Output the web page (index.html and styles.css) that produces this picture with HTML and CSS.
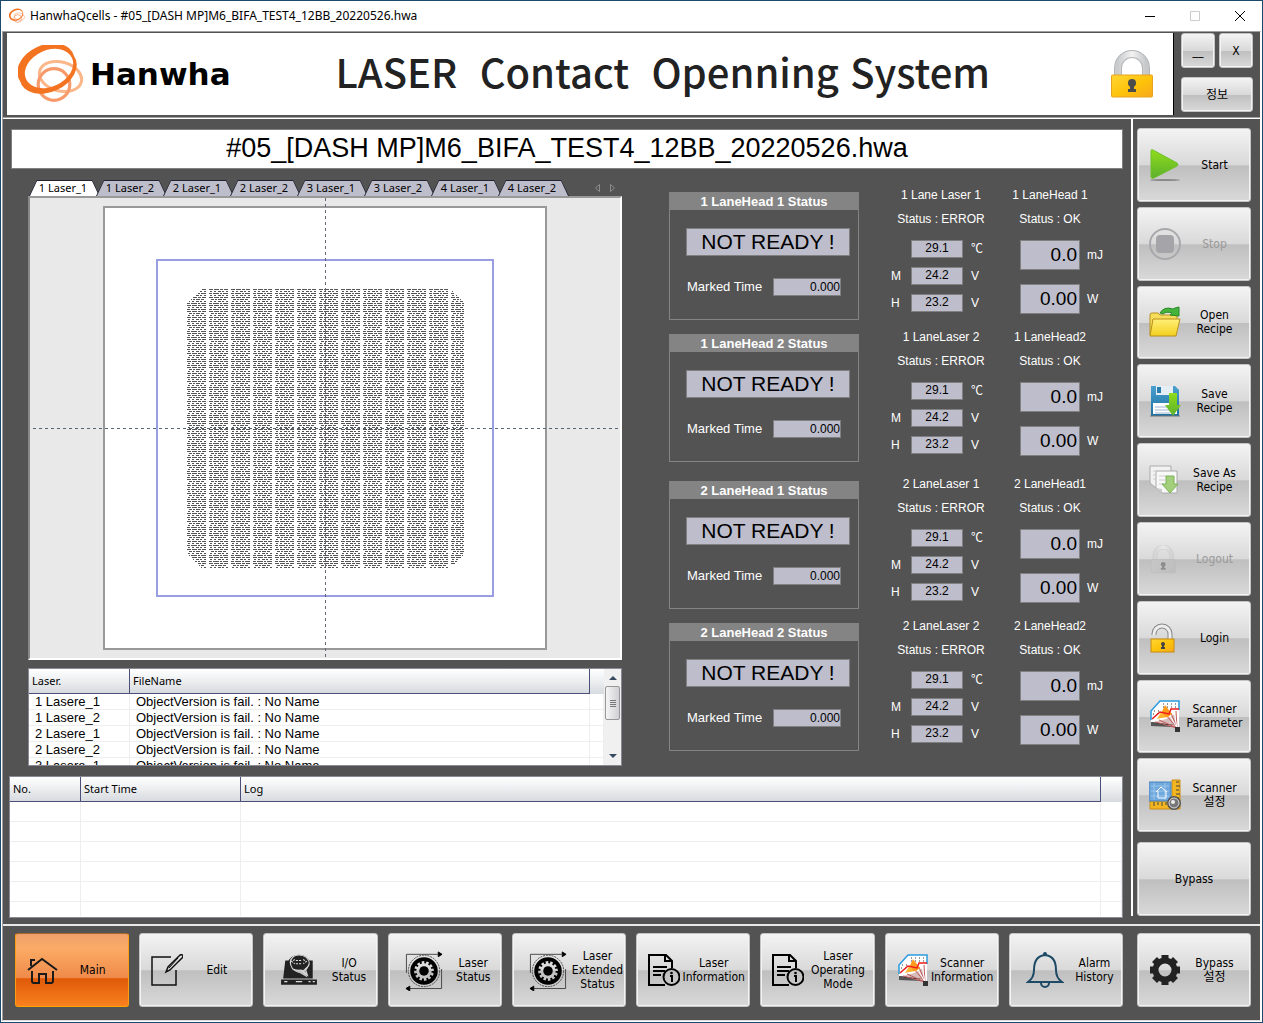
FILE: index.html
```
<!DOCTYPE html>
<html lang="ko">
<head>
  <meta charset="UTF-8" />
  <meta name="viewport" content="width=device-width, initial-scale=1" />
  <title>HanwhaQcells - #05_[DASH MP]M6_BIFA_TEST4_12BB_20220526.hwa</title>
  <link rel="stylesheet" href="styles.css">
</head>
<body>

<!-- shared icons -->
<svg class="defs" width="0" height="0" aria-hidden="true">
  <defs>
    <linearGradient id="gold" x1="0" y1="0" x2="1" y2="1"><stop offset="0" stop-color="#ffd633"/><stop offset=".55" stop-color="#fdc20a"/><stop offset="1" stop-color="#f7a81c"/></linearGradient>
    <linearGradient id="steel" x1="0" y1="0" x2="1" y2="0"><stop offset="0" stop-color="#c9cbcd"/><stop offset=".5" stop-color="#f2f2f2"/><stop offset="1" stop-color="#c5c7c9"/></linearGradient>
    <linearGradient id="green" x1="0" y1="0" x2="0" y2="1"><stop offset="0" stop-color="#8fdc1c"/><stop offset="1" stop-color="#5cb02c"/></linearGradient>
    <linearGradient id="folder" x1="0" y1="0" x2="0" y2="1"><stop offset="0" stop-color="#fff07a"/><stop offset="1" stop-color="#f3cf1c"/></linearGradient>
    <linearGradient id="blue" x1="0" y1="0" x2="0" y2="1"><stop offset="0" stop-color="#4aa0cf"/><stop offset="1" stop-color="#1d6f9f"/></linearGradient>
  </defs>
  <symbol id="i-logo" viewBox="0 -1 66 58">
    <ellipse cx="42.500" cy="30.500" rx="21.500" ry="14.500" transform="rotate(15 42.500 30.500)" fill="none" stroke="#fbb689" stroke-width="3"/>
    <circle cx="36" cy="38.500" r="15.800" fill="none" stroke="#f89b6c" stroke-width="3.200"/>
    <path fill="#f37321" fill-rule="evenodd" d="M2 35 A30 21 -25 1 1 56 10 A30 21 -25 1 1 2 35 M8 33 A25 18 -25 1 0 54 12 A25 18 -25 1 0 8 33"/>
  </symbol>
  <symbol id="i-lock" viewBox="0 0 42 48">
    <path d="M7 25V18a14 14 0 0 1 28 0v7" fill="none" stroke="#b4b6b8" stroke-width="8"/>
    <path d="M7 25V18a14 14 0 0 1 28 0v7" fill="none" stroke="url(#steel)" stroke-width="6"/>
    <rect x=".5" y="25" width="41" height="22" rx="1" fill="url(#gold)" stroke="#e9a41f"/>
    <circle cx="21" cy="33" r="4" fill="#4c4c4c"/><path d="M19 34h4v5h2v3h-8v-3h2z" fill="#4c4c4c"/>
  </symbol>
  <symbol id="i-scan" viewBox="0 0 32 32">
    <path d="M2 11L11 1h19v26L2 22z" fill="#fff"/>
    <path d="M2 20v-9L11 1h19v9" fill="none" stroke="#2a9be0" stroke-width="1.500"/>
    <path d="M14 4h15M14 7h15M5 11h8M4 14h6" stroke="#333" stroke-width="1" stroke-dasharray="1 3"/>
    <path d="M2 23l26 6-2-15-9 5z" fill="#d9bcbc"/>
    <path d="M2 22l24 3-22 0z" fill="#333"/>
    <path d="M28 28L17 15M28 28L10 20M28 28L22 13M28 28l-1-17M28 28L6 22" stroke="#c05a5a" stroke-width="1"/>
    <path d="M28 28L20 14M28 28L25 12" stroke="#fff" stroke-width="1"/>
    <path d="M10 18l6-13 7 9-4 3z" fill="#ff9a1a"/><path d="M8 19l5-8 3 6z" fill="#ffb52e"/>
    <path d="M3 19l8-7 9 2 2-5h8" fill="none" stroke="#ee1c1c" stroke-width="1.500"/>
    <path d="M2 22l22 5-22-1z" fill="#555"/>
    <rect x="26" y="27" width="5" height="5" fill="#333"/>
  </symbol>
  <symbol id="i-cog" viewBox="0 0 40 42">
    <path d="M1.500 24V4.500h33M38.500 20v20.500H5" fill="none" stroke="#444" stroke-width="1"/>
    <path d="M39 4.500l-4-2.500v5zM1 40.500l4-2.500v5z" fill="#000" stroke="#000"/>
    <circle cx="20" cy="22" r="16.500" fill="none" stroke="#444" stroke-dasharray="2 1"/>
    <circle cx="20" cy="22" r="12.500" fill="none" stroke="#000" stroke-width="4"/>
    <circle cx="20" cy="22" r="10" fill="none" stroke="#000" stroke-width="4" stroke-dasharray="2.240 3"/>
    <circle cx="20" cy="22" r="5" fill="#000"/>
  </symbol>
  <symbol id="i-doc" viewBox="0 0 32 32">
    <path d="M17 31H1V1h17l6 6v7" fill="none" stroke="#000" stroke-width="2"/>
    <path d="M17 1v6h7M5 13h14M5 17h12M5 21h8" fill="none" stroke="#000" stroke-width="2"/>
    <circle cx="23.500" cy="23" r="8" fill="none" stroke="#000" stroke-width="2"/>
    <path d="M22 22h2v6" fill="none" stroke="#000" stroke-width="2"/><circle cx="23.500" cy="19" r="1.300"/>
  </symbol>
</svg>

<header class="titlebar">
  <svg class="app-icon"><use href="#i-logo"/></svg>
  <span class="app-title">HanwhaQcells - #05_[DASH MP]M6_BIFA_TEST4_12BB_20220526.hwa</span>
  <button class="win-btn" aria-label="Minimize"><svg width="12" height="12"><path d="M1 6.500h10" stroke="#000"/></svg></button>
  <button class="win-btn" aria-label="Maximize" disabled><svg width="12" height="12"><path d="M1.500 1.500h9v9h-9z" fill="none" stroke="#ccc"/></svg></button>
  <button class="win-btn" aria-label="Close"><svg width="12" height="12"><path d="M1 1l10 10M11 1L1 11" stroke="#000"/></svg></button>
</header>

<div class="frame">
  <div class="banner">
    <div class="banner-panel">
      <div class="brand"><svg class="brand-mark"><use href="#i-logo"/></svg><span>Hanwha</span></div>
      <h1>LASER  Contact  Openning System</h1>
      <svg class="banner-lock"><use href="#i-lock"/></svg>
    </div>
    <div class="banner-buttons">
      <button class="btn small">__</button>
      <button class="btn small">X</button>
      <button class="btn small info">정보</button>
    </div>
  </div>

  <div class="middle">
    <main class="content">
      <h2 class="recipe-name">#05_[DASH MP]M6_BIFA_TEST4_12BB_20220526.hwa</h2>

      <div class="workspace">
        <div class="left">
          <div class="tabs">
            <button class="tab active"><span>1 Laser_1</span></button>
            <button class="tab"><span>1 Laser_2</span></button>
            <button class="tab"><span>2 Laser_1</span></button>
            <button class="tab"><span>2 Laser_2</span></button>
            <button class="tab"><span>3 Laser_1</span></button>
            <button class="tab"><span>3 Laser_2</span></button>
            <button class="tab"><span>4 Laser_1</span></button>
            <button class="tab"><span>4 Laser_2</span></button>
            <svg class="tab-nav" width="24" height="10"><path d="M6.500 1.500v7l-4-3.500zM17.500 1.500v7l4-3.500z" fill="none" stroke="#8c8c8c"/></svg>
          </div>
          <div class="view">
            <svg viewBox="0 0 590 460" shape-rendering="crispEdges">
              <defs>
                <pattern id="hatch" width="22" height="28" x="157" y="91" patternUnits="userSpaceOnUse">
                  <g stroke="#555" stroke-width="1" fill="none">
                    <path d="M0 .5h4m1 0h5m1 0h3m1 0h4M0 8.500h4m1 0h5m1 0h3m1 0h4M0 16.500h4m1 0h5m1 0h3m1 0h4M0 22.500h4m1 0h5m1 0h3m1 0h4"/>
                    <path d="M1 2.500h2m2 0h2m2 0h3m1 0h2m2 0h2M1 6.500h2m2 0h2m2 0h3m1 0h2m2 0h2M1 12.500h2m2 0h2m2 0h3m1 0h2m2 0h2M1 18.500h2m2 0h2m2 0h3m1 0h2m2 0h2M1 26.500h2m2 0h2m2 0h3m1 0h2m2 0h2"/>
                    <path d="M0 4.500h3m1 0h6m1 0h2m1 0h5M0 14.500h3m1 0h6m1 0h2m1 0h5M0 20.500h3m1 0h6m1 0h2m1 0h5"/>
                    <path d="M2 10.500h3m1 0h2m1 0h4m1 0h3M2 24.500h3m1 0h2m1 0h4m1 0h3"/>
                  </g>
                </pattern>
              </defs>
              <rect x="74" y="9" width="442" height="442" fill="#fff" stroke="#999" stroke-width="2"/>
              <rect x="127" y="62" width="336" height="336" fill="none" stroke="#999de2" stroke-width="2"/>
              <path d="M171 91H420L434 105V356L420 370H171L157 356V105Z" fill="url(#hatch)"/>
              <path d="M295.500 0V460" stroke="#667" stroke-dasharray="3 3"/>
              <path d="M3 230.500H590" stroke="#567" stroke-dasharray="3 3"/>
            </svg>
          </div>
          <div class="file-list">
            <div class="file-rows">
              <table>
                <colgroup><col class="c-laser"><col><col class="c-tail"></colgroup>
                <thead><tr><th>Laser.</th><th>FileName</th><td></td></tr></thead>
                <tbody>
                  <tr><td>1 Lasere_1</td><td>ObjectVersion is fail. : No Name</td><td></td></tr>
                  <tr><td>1 Lasere_2</td><td>ObjectVersion is fail. : No Name</td><td></td></tr>
                  <tr><td>2 Lasere_1</td><td>ObjectVersion is fail. : No Name</td><td></td></tr>
                  <tr><td>2 Lasere_2</td><td>ObjectVersion is fail. : No Name</td><td></td></tr>
                  <tr><td>3 Lasere_1</td><td>ObjectVersion is fail. : No Name</td><td></td></tr>
                </tbody>
              </table>
            </div>
            <div class="scrollbar">
              <button aria-label="Scroll up"><svg width="8" height="4"><path d="M0 4l4-4 4 4z" fill="#34495e"/></svg></button>
              <div class="thumb"></div>
              <button aria-label="Scroll down"><svg width="8" height="4"><path d="M0 0l4 4 4-4z" fill="#34495e"/></svg></button>
            </div>
          </div>
        </div>

        <div class="lanes">
          <section class="lane">
            <fieldset class="head-box">
              <legend>1 LaneHead 1 Status</legend>
              <input class="ready" value="NOT READY !" aria-label="1 LaneHead 1 Status" readonly>
              <label>Marked Time <input value="0.000" readonly></label>
            </fieldset>
            <div class="laser">
              <p>1 Lane Laser 1</p>
              <p>Status : ERROR</p>
              <div class="readings">
                <label for="t11"></label><input id="t11" value="29.1" aria-label="Temperature" readonly><span>℃</span>
                <label for="m11">M</label><input id="m11" value="24.2" readonly><span>V</span>
                <label for="h11">H</label><input id="h11" value="23.2" readonly><span>V</span>
              </div>
            </div>
            <div class="power">
              <p>1 LaneHead 1</p>
              <p>Status : OK</p>
              <label><input value="0.0" readonly> mJ</label>
              <label><input value="0.00" readonly> W</label>
            </div>
          </section>

          <section class="lane">
            <fieldset class="head-box">
              <legend>1 LaneHead 2 Status</legend>
              <input class="ready" value="NOT READY !" aria-label="1 LaneHead 2 Status" readonly>
              <label>Marked Time <input value="0.000" readonly></label>
            </fieldset>
            <div class="laser">
              <p>1 LaneLaser 2</p>
              <p>Status : ERROR</p>
              <div class="readings">
                <label for="t12"></label><input id="t12" value="29.1" aria-label="Temperature" readonly><span>℃</span>
                <label for="m12">M</label><input id="m12" value="24.2" readonly><span>V</span>
                <label for="h12">H</label><input id="h12" value="23.2" readonly><span>V</span>
              </div>
            </div>
            <div class="power">
              <p>1 LaneHead2</p>
              <p>Status : OK</p>
              <label><input value="0.0" readonly> mJ</label>
              <label><input value="0.00" readonly> W</label>
            </div>
          </section>

          <section class="lane second">
            <fieldset class="head-box">
              <legend>2 LaneHead 1 Status</legend>
              <input class="ready" value="NOT READY !" aria-label="2 LaneHead 1 Status" readonly>
              <label>Marked Time <input value="0.000" readonly></label>
            </fieldset>
            <div class="laser">
              <p>2 LaneLaser 1</p>
              <p>Status : ERROR</p>
              <div class="readings">
                <label for="t21"></label><input id="t21" value="29.1" aria-label="Temperature" readonly><span>℃</span>
                <label for="m21">M</label><input id="m21" value="24.2" readonly><span>V</span>
                <label for="h21">H</label><input id="h21" value="23.2" readonly><span>V</span>
              </div>
            </div>
            <div class="power">
              <p>2 LaneHead1</p>
              <p>Status : OK</p>
              <label><input value="0.0" readonly> mJ</label>
              <label><input value="0.00" readonly> W</label>
            </div>
          </section>

          <section class="lane">
            <fieldset class="head-box">
              <legend>2 LaneHead 2 Status</legend>
              <input class="ready" value="NOT READY !" aria-label="2 LaneHead 2 Status" readonly>
              <label>Marked Time <input value="0.000" readonly></label>
            </fieldset>
            <div class="laser">
              <p>2 LaneLaser 2</p>
              <p>Status : ERROR</p>
              <div class="readings">
                <label for="t22"></label><input id="t22" value="29.1" aria-label="Temperature" readonly><span>℃</span>
                <label for="m22">M</label><input id="m22" value="24.2" readonly><span>V</span>
                <label for="h22">H</label><input id="h22" value="23.2" readonly><span>V</span>
              </div>
            </div>
            <div class="power">
              <p>2 LaneHead2</p>
              <p>Status : OK</p>
              <label><input value="0.0" readonly> mJ</label>
              <label><input value="0.00" readonly> W</label>
            </div>
          </section>
        </div>
      </div>

      <div class="log">
        <table>
          <colgroup><col class="c-no"><col class="c-time"><col><col class="c-end"></colgroup>
          <thead><tr><th>No.</th><th>Start Time</th><th>Log</th><td></td></tr></thead>
          <tbody>
            <tr><td></td><td></td><td></td><td></td></tr>
            <tr><td></td><td></td><td></td><td></td></tr>
            <tr><td></td><td></td><td></td><td></td></tr>
            <tr><td></td><td></td><td></td><td></td></tr>
            <tr><td></td><td></td><td></td><td></td></tr>
            <tr class="rest"><td></td><td></td><td></td><td></td></tr>
          </tbody>
        </table>
      </div>
    </main>

    <aside class="side">
      <button class="btn">
        <svg class="icon" viewBox="0 0 32 32"><ellipse cx="16" cy="31" rx="15" ry="1" fill="#888"/><path d="M2 2q0-2 2-1l24 13q2 1 0 3L5 29q-3 1-3-1z" fill="url(#green)" stroke="#6fc02a"/></svg>
        <span>Start</span>
      </button>
      <button class="btn" disabled>
        <svg class="icon" viewBox="0 0 32 32"><circle cx="16" cy="16" r="15" fill="none" stroke="#a9a9ad" stroke-width="2"/><rect x="7" y="7" width="18" height="18" rx="4" fill="#a4a4a9"/></svg>
        <span>Stop</span>
      </button>
      <button class="btn">
        <svg class="icon" viewBox="0 0 32 32"><path d="M1 29V9q0-2 2-2h6l2 2h17v6" fill="#f5dc5a" stroke="#b8901c"/><path d="M4 13h27l-4 17H1z" fill="url(#folder)" stroke="#b8901c"/><path d="M11 7Q15 0 24 3l2-1 4-1v9l-9-1 2-2q-6-2-9 1z" fill="#44b53a" stroke="#2a8a2a"/></svg>
        <span>Open<br>Recipe</span>
      </button>
      <button class="btn">
        <svg class="icon" viewBox="0 0 32 32"><path d="M2 1h24l4 4v26H2z" fill="url(#blue)"/><path d="M7 1h17v9H7z" fill="#e4eef4"/><path d="M8 2h4v6H8z" fill="#2b7fae"/><path d="M4 18h24v11H4z" fill="#fff"/><path d="M6 22h15M6 25h15M6 28h15" stroke="#9bb3d0"/><path d="M20 8h8v12h4l-8 11-8-11h4z" fill="url(#green)"/><path d="M1 31h30" stroke="#777"/></svg>
        <span>Save<br>Recipe</span>
      </button>
      <button class="btn">
        <svg class="icon" viewBox="0 0 32 32"><path d="M1 2h21v22H7l-6-5z" fill="#f2f2f2" stroke="#aaa"/><path d="M7 7h21v22H13l-6-5z" fill="#f8f8f8" stroke="#aaa"/><path d="M4 7h3M4 11h3M4 15h3M10 12h8M10 16h6M10 20h5" stroke="#ccc"/><path d="M17 12h8v8h4l-8 9-8-9h4z" fill="#a3cf7c" stroke="#7cb356"/><path d="M7 24l6 1v4z" fill="#ccc"/></svg>
        <span>Save As<br>Recipe</span>
      </button>
      <button class="btn" disabled>
        <svg class="icon faded" viewBox="-3 -3 54 54"><use href="#i-lock" width="42" height="48"/></svg>
        <span>Logout</span>
      </button>
      <button class="btn">
        <svg class="icon" viewBox="0 0 32 32"><path d="M5 13v-1a8 8 0 0 1 16 0v5" fill="none" stroke="#888" stroke-width="5"/><path d="M5 13v-1a8 8 0 0 1 16 0v5" fill="none" stroke="#eee" stroke-width="3"/><rect x="2" y="17" width="23" height="13" fill="url(#gold)" stroke="#c98c10"/><circle cx="14" cy="22" r="2" fill="#444"/><path d="M13 22h2v3h1v2h-4v-2h1z" fill="#444"/></svg>
        <span>Login</span>
      </button>
      <button class="btn">
        <svg class="icon"><use href="#i-scan"/></svg>
        <span>Scanner<br>Parameter</span>
      </button>
      <button class="btn">
        <svg class="icon" viewBox="0 0 32 32"><path d="M1 22h22V1h8v29H1z" fill="#f4b620" stroke="#c98c10"/><path d="M5 23v4M9 23v3M13 23v4M17 23v3M27 3h3M27 7h4M27 11h3M27 15h4M27 19h3" stroke="#444"/><rect x="0" y="3" width="22" height="19" fill="#6fa8dc" stroke="#4a83bd"/><path d="M2 7h18M2 12h18M2 17h18M5 4v17M16 4v17" stroke="#9cc6ec"/><path d="M7 13l5-5 6 5M9 12v7h8v-7" fill="none" stroke="#fff"/><circle cx="25" cy="24" r="7" fill="#555"/><circle cx="25" cy="24" r="5" fill="#777" stroke="#ddd" stroke-width="1"/><circle cx="24" cy="23" r="2" fill="#eee"/></svg>
        <span>Scanner<br>설정</span>
      </button>
      <button class="btn plain"><span>Bypass</span></button>
    </aside>
  </div>

  <nav class="menu">
    <div class="menu-main">
      <button class="btn current">
        <svg class="icon" viewBox="0 0 32 32"><path d="M1 16L15 5l15 11M4 12V6h4M5 17v10q0 2 2 2h5v-9h7v9h5q2 0 2-2V17" fill="none" stroke="#1a1a1a" stroke-width="2"/></svg>
        <span>Main</span>
      </button>
      <button class="btn">
        <svg class="icon" viewBox="0 0 32 32"><path d="M20 3H1v28h24V16" fill="none" stroke="#111" stroke-width="1.500"/><path d="M15 18l2-5L29 1q2-1 3 1 0 1-1 2L19 16z" fill="none" stroke="#111" stroke-width="1.500"/><path d="M27 4L18 14" stroke="#111"/></svg>
        <span>Edit</span>
      </button>
      <button class="btn wide">
        <svg class="icon" viewBox="0 0 36 32"><path d="M5 7h5q-1 10 9 12l7 4-2-6q4-3 3-10h4v17H3z" fill="#222"/><ellipse cx="18" cy="9" rx="9.500" ry="7" fill="#222" stroke="#222"/><path d="M12 15q5 2 8 1l6 5-2-6q7-5 1-11-6-4-12-1-6 5-1 12" fill="none" stroke="#ddd"/><path d="M14 6l-3 2 3 2M22 6l3 2-3 2M15 7h6M15 10h6" fill="none" stroke="#ddd" stroke-dasharray="2 1"/><path d="M1 25h34v5H1z" fill="#222"/><path d="M4 27h3M15 27h6M27 27h2M31 27h2" stroke="#ddd"/></svg>
        <span>I/O<br>Status</span>
      </button>
      <button class="btn wide">
        <svg class="icon cog"><use href="#i-cog"/></svg>
        <span>Laser<br>Status</span>
      </button>
      <button class="btn wide">
        <svg class="icon cog"><use href="#i-cog"/></svg>
        <span>Laser<br>Extended<br>Status</span>
      </button>
      <button class="btn">
        <svg class="icon"><use href="#i-doc"/></svg>
        <span>Laser<br>Information</span>
      </button>
      <button class="btn">
        <svg class="icon"><use href="#i-doc"/></svg>
        <span>Laser<br>Operating<br>Mode</span>
      </button>
      <button class="btn">
        <svg class="icon"><use href="#i-scan"/></svg>
        <span>Scanner<br>Information</span>
      </button>
      <button class="btn wide">
        <svg class="icon" viewBox="0 0 36 36"><path d="M1 30q6-4 6-12 0-14 11-15 11 1 11 15 0 8 6 12z" fill="none" stroke="#1e4a66" stroke-width="2"/><path d="M14 31a4 4 0 0 0 8 0" fill="none" stroke="#1e4a66" stroke-width="2"/><circle cx="18" cy="2" r="2" fill="#1e4a66"/></svg>
        <span>Alarm<br>History</span>
      </button>
    </div>
    <button class="btn">
      <svg class="icon" viewBox="0 0 32 32"><circle cx="16" cy="16" r="9.500" fill="none" stroke="#222" stroke-width="6"/><g stroke="#222" stroke-width="7"><path d="M16 1v5M16 26v5M1 16h5M26 16h5"/><path d="M5.500 5.500L9 9M23 23l3.500 3.500M5.500 26.500L9 23M23 9l3.500-3.500"/></g></svg>
      <span>Bypass<br>설정</span>
    </button>
  </nav>
</div>

</body>
</html>
```
FILE: styles.css
```
* {
  box-sizing: border-box;
}
body {
  margin: 0;
  min-height: 100vh;
  display: flex;
  flex-direction: column;
  border: 1px solid #1b4a6b;
  background: #fff;
  color: #000;
  font-family: "DejaVu Sans Condensed", "Noto Sans", "Noto Sans CJK KR", sans-serif;
  font-size: 12px;
}
button, input {
  font: inherit;
  color: inherit;
  margin: 0;
  padding: 0;
}
.defs {
  position: absolute;
}

/* window title bar */
.titlebar {
  display: flex;
  align-items: center;
  height: 30px;
  padding-left: 8px;
}
.app-icon {
  width: 16px;
  height: 16px;
  margin-right: 5px;
}
.app-title {
  flex: 1;
  padding-bottom: 2px;
  font-family: "Noto Sans", "Noto Sans CJK KR", sans-serif;
  font-size: 12px;
}
.win-btn {
  width: 45px;
  height: 30px;
  border: 0;
  background: none;
}
.win-btn svg {
  display: block;
  margin: auto;
}
.frame {
  flex: 1;
  display: flex;
  flex-direction: column;
  margin: 0 1px 1px;
  border: 1px solid #a0a0a0;
  border-right-color: #fff;
  border-bottom-color: #ddd;
  background: #535353;
}

/* banner */
.banner {
  display: flex;
  height: 86px;
  padding: 1px 7px 2px 4px;
  border-bottom: 1px solid #a0a0a0;
}
.banner-panel {
  flex: 1;
  display: flex;
  align-items: center;
  justify-content: space-between;
  padding: 0 20px 0 11px;
  border-right: 1px solid #000;
  background: #fff;
}
.brand {
  display: flex;
  align-items: center;
  gap: 6px;
  font: bold 31px "DejaVu Sans", sans-serif;
}
.brand-mark {
  width: 66px;
  height: 58px;
}
h1 {
  margin: 0 16px 6px 0;
  white-space: pre;
  color: #222;
  font: 500 40px "Noto Sans CJK KR", sans-serif;
}
.banner-lock {
  width: 42px;
  height: 48px;
}
.banner-buttons {
  display: grid;
  grid-template-columns: 34px 34px;
  grid-template-rows: 35px 35px;
  gap: 9px 4px;
  padding-left: 7px;
}
.banner-buttons .info {
  grid-column: span 2;
}

/* shared push button */
.btn {
  display: flex;
  align-items: center;
  min-width: 0;
  height: 74px;
  padding: 0 2px 0 11px;
  border: 1px solid #c4c4c4;
  border-radius: 3px;
  box-shadow: inset 0 0 0 1px #f3f3f3;
  background: linear-gradient(#f3f3f3, #d9d9d9 50%, #bfbfbf 51%, #d9d9d9);
  line-height: 14px;
}
.btn span {
  flex: 1;
}
.btn:disabled {
  color: #9a9a9a;
}
.btn.small {
  height: auto;
  justify-content: center;
  padding: 0;
}
.btn.wide {
  padding: 0 0 0 16px;
  gap: 3px;
}
.btn.plain {
  padding: 0;
  margin-top: 5px;
}
.btn.current {
  border-color: #a8682c #ff9c10 #ffa500;
  box-shadow: none;
  background: linear-gradient(#ee9f6c, #fbab65 20%, #f08a4a 61%, #e05a08 62%, #f9811f);
}
.icon {
  flex: none;
  width: 32px;
  height: 32px;
}
.wide .icon {
  width: 38px;
  height: 36px;
}
.wide .cog {
  height: 42px;
  overflow: visible;
}
.faded {
  filter: grayscale(1);
  opacity: .45;
}

/* middle area */
.middle {
  flex: 1;
  display: flex;
  border-top: 1px solid #fff;
}
.content {
  flex: 1;
  display: flex;
  flex-direction: column;
  min-width: 0;
  padding: 10px 8px 6px 6px;
}
.recipe-name {
  margin: 0 0 11px 2px;
  height: 40px;
  border: 1px solid #808080;
  background: #fff;
  text-align: center;
  font: 27px/36px "Liberation Sans", Arial, sans-serif;
}
.side {
  display: flex;
  flex-direction: column;
  gap: 5px;
  margin-bottom: 8px;
  padding: 9px 9px 0 4px;
  border-left: 2px solid #fff;
}
.side .btn {
  flex: 1;
  width: 114px;
}
.workspace {
  display: flex;
  padding: 0 13px 0 19px;
}
.left {
  flex: 1;
  min-width: 0;
  margin-right: 47px;
}

/* laser tabs */
.tabs {
  display: flex;
  align-items: center;
  height: 16px;
  padding-left: 1px;
}
.tab {
  width: 71px;
  height: 16px;
  margin-right: -4px;
  padding: 1px;
  border: 0;
  background: #223;
  clip-path: polygon(8px 0, 63px 0, 100% 100%, 0 100%);
}
.tab span {
  display: block;
  height: 15px;
  padding-right: 3px;
  background: #bdbdcb;
  clip-path: polygon(7px 0, 62px 0, 100% 100%, 0 100%);
  font: 11px/14px "Noto Sans", sans-serif;
}
.tab.active span {
  background: #fff;
}
.tab-nav {
  margin-left: auto;
  margin-right: 5px;
}
.view {
  border: 2px solid #777;
  border-color: #999 #fff #fff #888;
  background: #e9e9e9;
}
.view svg {
  display: block;
  width: 100%;
}

/* tables */
.file-list {
  display: flex;
  height: 98px;
  margin-top: 8px;
  border: 1px solid #8a8a96;
  background: #fff;
}
.file-rows {
  flex: 1;
  overflow: hidden;
}
table {
  width: 100%;
  table-layout: fixed;
  border-collapse: separate;
  border-spacing: 0;
}
th, td {
  padding: 0;
  text-align: left;
  white-space: nowrap;
}
thead th, thead td {
  height: 25px;
  background: linear-gradient(#fff, #eceef0 50%, #d7dadf);
}
thead th {
  padding: 0 0 2px 3px;
  border-right: 1px solid #4b4f78;
  border-bottom: 1px solid #4b4f78;
  font: 11px "Noto Sans", sans-serif;
}
tbody td {
  border-right: 1px solid #eee;
  border-bottom: 1px solid #eee;
}
.file-list tbody td {
  height: 16px;
  padding-left: 6px;
  font: 13px/15px "Liberation Sans", Arial, sans-serif;
}
.c-laser { width: 101px; }
.c-tail { width: 14px; }
.scrollbar {
  display: flex;
  flex-direction: column;
  width: 17px;
  padding: 1px;
  background: #f0f0f0;
}
.scrollbar button {
  height: 16px;
  border: 0;
  background: none;
}
.scrollbar svg {
  display: block;
  margin: auto;
}
.thumb {
  height: 34px;
  margin-bottom: auto;
  border: 1px solid #979797;
  border-radius: 2px;
  background:
    repeating-linear-gradient(#777 0 1px, transparent 1px 2px) center / 6px 7px no-repeat,
    linear-gradient(90deg, #f5f5f5, #d0d0d4);
}

/* lane status */
.lanes {
  padding-top: 12px;
  color: #fff;
  font: 12px/16px "Liberation Sans", Arial, "Noto Sans CJK KR", sans-serif;
}
.lane {
  display: flex;
  height: 142px;
}
.lane.second {
  margin-top: 5px;
}
.lane input {
  border: 1px solid #808080;
  background: #bdbdcb;
  color: #000;
}
.head-box {
  width: 190px;
  height: 128px;
  margin: 0 32px 0 0;
  padding: 0;
  border: 1px solid #848484;
}
.head-box legend {
  float: left;
  width: 100%;
  margin-bottom: 18px;
  padding: 0;
  background: #848484;
  text-align: center;
  font-size: 13px;
  font-weight: bold;
  line-height: 17px;
}
.head-box .ready {
  clear: both;
  display: block;
  width: 164px;
  height: 28px;
  margin: 0 0 22px 16px;
  text-align: center;
  font-size: 21px;
}
.head-box label {
  display: flex;
  align-items: center;
  justify-content: space-between;
  width: 154px;
  margin-left: 17px;
  font-size: 13px;
}
.head-box label input {
  width: 68px;
  height: 18px;
  text-align: right;
  font-size: 12px;
}
.lane p {
  margin: 0 0 8px;
  text-align: center;
}
.laser {
  width: 100px;
  margin: -5px 21px 0 0;
}
.readings {
  display: grid;
  grid-template-columns: 20px 52px 1fr;
  gap: 9px 0;
  margin-top: 13px;
  line-height: 18px;
}
.readings input {
  width: 52px;
  height: 18px;
  padding-bottom: 2px;
  text-align: center;
}
.readings span {
  padding-left: 8px;
}
.power {
  width: 98px;
  margin-top: -5px;
}
.power p {
  width: 76px;
}
.power label {
  display: flex;
  align-items: center;
  gap: 7px;
  height: 30px;
  margin: 13px 0 14px 8px;
}
.power label + label {
  margin-top: 0;
}
.power input {
  width: 60px;
  height: 30px;
  padding-right: 2px;
  text-align: right;
  font-size: 19px;
}

/* log */
.log {
  flex: 1;
  margin-top: 10px;
  border: 1px solid #8a8a96;
  background: #fff;
  overflow: hidden;
}
.log tbody td {
  height: 20px;
}
.log .rest td {
  height: 14px;
  border-bottom: 0;
}
.c-no { width: 71px; }
.c-time { width: 160px; }
.c-end { width: 21px; }

/* bottom menu */
.menu {
  display: flex;
  gap: 14px;
  padding: 7px 9px 13px 12px;
  border-top: 2px solid #e8e8e8;
}
.menu-main {
  flex: 1;
  display: grid;
  grid-template-columns: repeat(9, minmax(0, 1fr));
  gap: 10px;
}
.menu > .btn {
  width: 114px;
}
```
